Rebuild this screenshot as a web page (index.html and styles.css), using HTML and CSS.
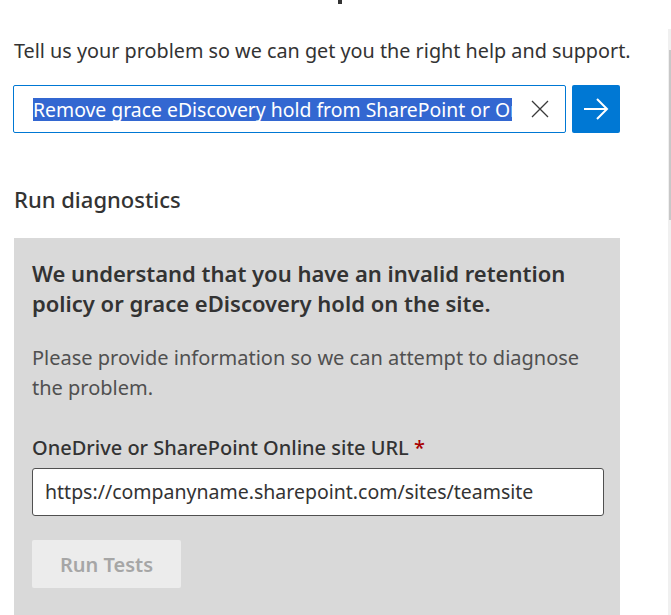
FILE: index.html
```html
<!DOCTYPE html>
<html lang="en">
<head>
<meta charset="utf-8">
<title>Contact Support</title>
<link rel="stylesheet" href="styles.css">
</head>
<body>
<div class="page">
  <div class="heading-tail"></div>
  <p class="intro">Tell us your problem so we can get you the right help and support.</p>
  <div class="search-row">
    <div class="search-box">
      <span class="search-text"><span class="selected">Remove grace eDiscovery hold from SharePoint or OneDrive</span></span>
      <svg class="clear" width="20" height="20" viewBox="0 0 20 20"><path d="M2 2 L18 18 M18 2 L2 18" stroke="#3a3a3a" stroke-width="1.3" fill="none"/></svg>
    </div>
    <button class="go" type="button" aria-label="Submit">
      <svg width="26" height="24" viewBox="0 0 26 24"><path d="M1 12 H24 M14 2 L24 12 L14 22" stroke="#fff" stroke-width="2" fill="none"/></svg>
    </button>
  </div>
  <h2 class="section-title">Run diagnostics</h2>
  <div class="panel">
    <h3 class="panel-title">We understand that you have an invalid retention policy or grace eDiscovery hold on the site.</h3>
    <p class="panel-text">Please provide information so we can attempt to diagnose the problem.</p>
    <label class="field-label">OneDrive or SharePoint Online site URL <span class="req">*</span></label>
    <div class="url-input">https://companyname.sharepoint.com/sites/teamsite</div>
    <button class="run" type="button">Run Tests</button>
  </div>
</div>
<div class="scrollbar"><div class="thumb"></div></div>
</body>
</html>
```

FILE: styles.css
```css
html, body {
  margin: 0;
  padding: 0;
  background: #fff;
  height: 615px;
  overflow: hidden;
}
body {
  font-family: "Noto Sans", "Open Sans", sans-serif;
  color: #323130;
  position: relative;
}
.page {
  padding-left: 14px;
  width: 606px;
}
.heading-tail {
  width: 4px;
  height: 4px;
  margin-left: 324px;
  background: #333;
}
.intro {
  margin: 34px 0 0 0;
  font-size: 19.8px;
  letter-spacing: 0;
  line-height: 26px;
  white-space: nowrap;
  color: #333;
}
.search-row {
  display: flex;
  gap: 6px;
  margin-top: 21px;
  margin-left: -1px;
}
.search-box {
  height: 46px;
  width: 534px;
  border: 1px solid #0078d4;
  border-radius: 2px;
  display: flex;
  align-items: center;
  padding-left: 19px;
}
.search-text {
  width: 479px;
  overflow: hidden;
  white-space: nowrap;
  font-size: 19.4px;
  line-height: 23px;
}
.selected {
  background: #3367d1;
  color: #fff;
}
.clear {
  margin-left: 18px;
}
.go {
  width: 48px;
  height: 48px;
  border: none;
  border-radius: 2px;
  background: #0078d4;
  display: flex;
  align-items: center;
  justify-content: center;
  padding: 0;
}
.section-title {
  margin: 51px 0 0 0;
  font-size: 22px;
  line-height: 30px;
  font-weight: 500;
  color: #333;
}
.panel {
  margin-top: 24px;
  background: #d9d9d9;
  padding: 20px 18px 30px 18px;
}
.panel-title {
  margin: 0;
  font-size: 22px;
  line-height: 30px;
  font-weight: 600;
  color: #333;
}
.panel-text {
  margin: 25px 0 0 0;
  max-width: 548px;
  font-size: 20px;
  line-height: 30px;
  color: #505050;
}
.field-label {
  display: block;
  margin-top: 32px;
  font-size: 20px;
  line-height: 26px;
  font-weight: 500;
  color: #333;
}
.req {
  color: #a80000;
}
.url-input {
  margin-top: 7px;
  height: 46px;
  width: 558px;
  background: #fff;
  border: 1px solid #505050;
  border-radius: 3px;
  padding-left: 12px;
  font-size: 19.5px;
  line-height: 46px;
  color: #333;
}
.run {
  display: block;
  margin-top: 24px;
  width: 149px;
  height: 48px;
  border: none;
  border-radius: 2px;
  background: #ececec;
  color: #a6a6a6;
  font-family: inherit;
  font-size: 20px;
  font-weight: 600;
}
.scrollbar {
  position: absolute;
  top: 29px;
  right: 0;
  width: 3px;
  height: 586px;
  background: #f0f0f0;
}
.thumb {
  margin-top: 21px;
  margin-left: 1px;
  width: 2px;
  height: 170px;
  background: #c8c8c8;
}
```
